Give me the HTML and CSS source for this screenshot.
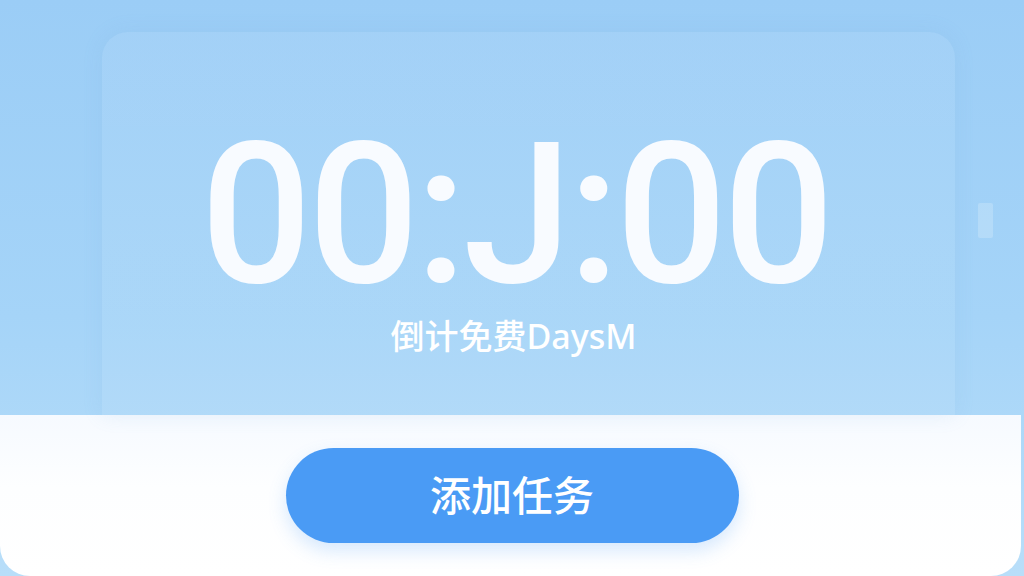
FILE: index.html
```html
<!DOCTYPE html>
<html lang="zh">
<head>
<meta charset="utf-8">
<title>倒计时</title>
<link rel="stylesheet" href="styles.css">
</head>
<body>
<div class="app">
  <div class="stage">
    <div class="card">
      <div class="timer">00:J:00</div>
      <div class="subtitle">倒计免费DaysM</div>
    </div>
    <div class="side-handle"></div>
  </div>
  <div class="panel">
    <button class="add-btn">添加任务</button>
  </div>
</div>
</body>
</html>
```
FILE: styles.css
```css
html, body {
  margin: 0;
  padding: 0;
  width: 1024px;
  height: 576px;
  overflow: hidden;
}
body {
  background: linear-gradient(180deg, #9bcdf6 0%, #a5d4f8 55%, #b8def9 100%);
  font-family: "Noto Sans", "Noto Sans CJK SC", sans-serif;
}
.app {
  display: flex;
  flex-direction: column;
  height: 576px;
}
.stage {
  position: relative;
  height: 415px;
  display: flex;
  flex-direction: column;
  padding: 32px 69px 0 102px;
  box-sizing: border-box;
}
.card {
  flex: 1;
  border-radius: 26px 26px 0 0;
  background: linear-gradient(180deg, rgba(255,255,255,0.07) 0%, rgba(255,255,255,0.06) 100%);
  box-shadow: 0 0 20px rgba(120, 170, 220, 0.14);
  display: flex;
  flex-direction: column;
  align-items: center;
  padding: 88px 30px 0 0;
  box-sizing: border-box;
}
.timer {
  font-family: Roboto, "Noto Sans", sans-serif;
  font-size: 196px;
  line-height: 190px;
  font-weight: 500;
  color: #f8fbff;
  letter-spacing: -4px;
  height: 190px;
  padding-left: 4px;
}
.subtitle {
  margin-top: 8px;
  font-size: 34px;
  line-height: 36px;
  color: #ffffff;
  font-weight: 500;
}
.side-handle {
  position: absolute;
  left: 978px;
  top: 203px;
  width: 15px;
  height: 35px;
  border-radius: 2px;
  background: rgba(255,255,255,0.2);
}
.panel {
  height: 161px;
  width: 1021px;
  background: linear-gradient(180deg, #f6faff 0%, #fdfeff 45%, #ffffff 100%);
  border-radius: 0 0 30px 30px;
  display: flex;
  align-items: center;
  justify-content: center;
  padding-left: 3px;
  box-sizing: border-box;
}
.add-btn {
  width: 453px;
  height: 95px;
  border: none;
  border-radius: 48px;
  background: #4a9bf5;
  color: #ffffff;
  font-family: "Noto Sans CJK SC", sans-serif;
  font-size: 41px;
  font-weight: 500;
  line-height: 1;
  padding: 0 0 4px 0;
  box-shadow: 0 8px 18px rgba(74, 155, 245, 0.22);
  cursor: pointer;
}
```
